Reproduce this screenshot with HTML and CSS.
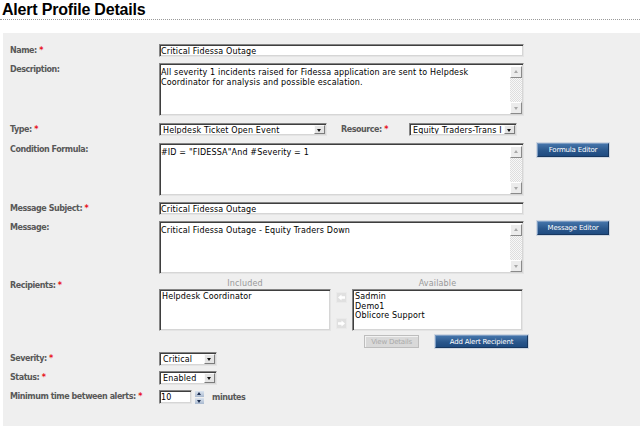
FILE: index.html
```html
<!DOCTYPE html>
<html lang="en">
<head>
  <meta charset="UTF-8" />
  <title>Alert Profile Details</title>
  <link rel="stylesheet" href="styles.css">
</head>
<body>

  <h1 class="page-title">Alert Profile Details</h1>

  <div class="panel">

    <div class="row row-name">
      <div class="label">Name: <span class="req">*</span></div>
      <input class="text-input wide" type="text" value="Critical Fidessa Outage">
    </div>

    <div class="row row-desc">
      <div class="label">Description:</div>
      <div class="textbox wide">
        <div class="textbox-text">All severity 1 incidents raised for Fidessa application are sent to Helpdesk Coordinator for analysis and possible escalation.</div>
        <div class="scrollbar"><span class="sb-btn up"></span><span class="sb-track"></span><span class="sb-btn down"></span></div>
      </div>
    </div>

    <div class="row row-type">
      <div class="label">Type: <span class="req">*</span></div>
      <div class="select select-type"><span class="select-text">Helpdesk Ticket Open Event</span><span class="drop"></span></div>
      <div class="label label-inline">Resource: <span class="req">*</span></div>
      <div class="select select-resource"><span class="select-text">Equity Traders-Trans I</span><span class="drop"></span></div>
    </div>

    <div class="row row-cond">
      <div class="label">Condition Formula:</div>
      <div class="textbox wide">
        <div class="textbox-text">#ID = "FIDESSA"And #Severity = 1</div>
        <div class="scrollbar"><span class="sb-btn up"></span><span class="sb-track"></span><span class="sb-btn down"></span></div>
      </div>
      <button class="btn-blue side-btn">Formula Editor</button>
    </div>

    <div class="row row-subject">
      <div class="label">Message Subject: <span class="req">*</span></div>
      <input class="text-input wide" type="text" value="Critical Fidessa Outage">
    </div>

    <div class="row row-message">
      <div class="label">Message:</div>
      <div class="textbox wide">
        <div class="textbox-text">Critical Fidessa Outage - Equity Traders Down</div>
        <div class="scrollbar"><span class="sb-btn up"></span><span class="sb-track"></span><span class="sb-btn down"></span></div>
      </div>
      <button class="btn-blue side-btn">Message Editor</button>
    </div>

    <div class="row row-recipients">
      <div class="label label-recip">Recipients: <span class="req">*</span></div>
      <div class="recipients">
        <div class="recip-lists">
          <div class="recip-col included">
            <div class="list-caption">Included</div>
            <div class="listbox">
              <div>Helpdesk Coordinator</div>
            </div>
          </div>
          <div class="move-btns">
            <span class="move-btn">
              <svg width="9" height="9" viewBox="0 0 9 9"><path d="M1 4.5 L4.5 1.5 V3.3 H8 V5.7 H4.5 V7.5 Z" fill="#fff"/></svg>
            </span>
            <span class="move-btn">
              <svg width="9" height="9" viewBox="0 0 9 9"><path d="M8 4.5 L4.5 1.5 V3.3 H1 V5.7 H4.5 V7.5 Z" fill="#fff"/></svg>
            </span>
          </div>
          <div class="recip-col available">
            <div class="list-caption">Available</div>
            <div class="listbox">
              <div>Sadmin</div>
              <div>Demo1</div>
              <div>Oblicore Support</div>
            </div>
          </div>
        </div>
        <div class="recip-actions">
          <button class="btn-disabled">View Details</button>
          <button class="btn-blue btn-add">Add Alert Recipient</button>
        </div>
      </div>
    </div>

    <div class="row row-severity">
      <div class="label">Severity: <span class="req">*</span></div>
      <div class="select select-small"><span class="select-text">Critical</span><span class="drop"></span></div>
    </div>

    <div class="row row-status">
      <div class="label">Status: <span class="req">*</span></div>
      <div class="select select-small"><span class="select-text">Enabled</span><span class="drop"></span></div>
    </div>

    <div class="row row-min">
      <div class="label">Minimum time between alerts: <span class="req">*</span></div>
      <input class="text-input num-input" type="text" value="10">
      <div class="spinner"><span class="spin up"></span><span class="spin down"></span></div>
      <div class="units">minutes</div>
    </div>

  </div>

</body>
</html>
```

FILE: styles.css
```css
* {
  box-sizing: border-box;
}

body {
  margin: 0;
  background: #ffffff;
  font-family: 'DejaVu Sans', Verdana, sans-serif;
  font-size: 8px;
  letter-spacing: 0.15px;
  color: #000;
}

.page-title {
  margin: 0;
  padding-left: 2px;
  height: 20px;
  font-family: 'Liberation Sans', Arial, sans-serif;
  font-size: 16px;
  line-height: 19px;
  letter-spacing: -0.2px;
  font-weight: bold;
  color: #000;
  border-bottom: 1px dotted #9a9a9a;
}

.panel {
  margin: 13px 0 0 3px;
  padding: 11px 0 30px 7px;
  background: #efefef;
  height: 393px;
}

.row {
  display: flex;
  align-items: flex-start;
}

.label {
  width: 149px;
  flex: none;
  padding-top: 1px;
  line-height: 11px;
  font-weight: bold;
  letter-spacing: -0.45px;
  color: #585858;
  white-space: nowrap;
}

.req {
  color: #e8101a;
}

/* sunken fields */
.text-input,
.textbox,
.listbox,
.select {
  background: #fff;
  border: 1px solid;
  border-color: #858585 #e4e4e4 #e4e4e4 #858585;
  box-shadow: inset 1px 1px 0 #3e3e3e, inset -1px -1px 0 #d6d6d6;
}

.text-input {
  height: 13px;
  margin: 0;
  padding: 1px 1px 0 1px;
  font-family: inherit;
  font-size: 8px;
  letter-spacing: 0.15px;
  color: #000;
  outline: none;
}

.wide {
  width: 365px;
}

.row-name,
.row-subject {
  margin-bottom: 6px;
}

.row-desc,
.row-type {
  margin-bottom: 7px;
}

.row-cond,
.row-message {
  margin-bottom: 6px;
}

.textbox {
  height: 53px;
  display: flex;
  padding: 2px 1px 1px 1px;
}

.textbox-text {
  flex: 1;
  padding: 2px 0 0 0;
  line-height: 9.5px;
  overflow: hidden;
}

.scrollbar {
  width: 12px;
  display: flex;
  flex-direction: column;
  background: repeating-conic-gradient(#f8f8f8 0 25%, #dedede 0 50%) 0 0 / 2px 2px;
}

.sb-btn {
  height: 12px;
  background: #ececec;
  border: 1px solid;
  border-color: #fff #8a8a8a #8a8a8a #fff;
  position: relative;
}

.sb-btn::after {
  content: '';
  position: absolute;
  left: 3px;
  width: 0;
  height: 0;
  border-left: 2.5px solid transparent;
  border-right: 2.5px solid transparent;
}

.sb-btn.up::after {
  top: 3px;
  border-bottom: 3px solid #a8a8a8;
}

.sb-btn.down::after {
  top: 4px;
  border-top: 3px solid #a8a8a8;
}

.sb-track {
  flex: 1;
}

/* select boxes */
.select {
  height: 13px;
  display: flex;
  align-items: stretch;
  padding: 1px 1px 1px 2px;
}

.select-text {
  flex: 1;
  padding-left: 1px;
  line-height: 11px;
  overflow: hidden;
  white-space: nowrap;
}

.drop {
  width: 11px;
  flex: none;
  background: #e4e4e4;
  border: 1px solid;
  border-color: #fafafa #7c7c7c #7c7c7c #fafafa;
  position: relative;
}

.drop::after {
  content: '';
  position: absolute;
  left: 2px;
  top: 3px;
  border-left: 2.5px solid transparent;
  border-right: 2.5px solid transparent;
  border-top: 3px solid #111;
}

.select-type {
  width: 168px;
}

.label-inline {
  width: 68px;
  margin-left: 14px;
}

.select-resource {
  width: 108px;
}

.select-small {
  width: 58px;
  height: 14px;
}

/* buttons */
button {
  font-family: inherit;
  font-size: 7px;
  letter-spacing: -0.2px;
  padding: 0;
  cursor: pointer;
}

.btn-blue {
  height: 14px;
  color: #fff;
  background: linear-gradient(#4474aa, #2a578c 55%, #1f4b80);
  border: 1px solid;
  border-color: #7d9cc2 #17375f #17375f #7d9cc2;
  box-shadow: 0 0 0 1px #cfd7e2;
}

.side-btn {
  width: 72px;
  margin-left: 13px;
}

/* recipients */
.row-recipients {
  margin-bottom: 4px;
}

.label-recip {
  padding-top: 0;
}

.recipients {
  width: 370px;
}

.recip-lists {
  display: flex;
  align-items: flex-start;
}

.recip-col {
  display: flex;
  flex-direction: column;
}

.included {
  width: 172px;
}

.available {
  width: 171px;
}

.list-caption {
  height: 9px;
  line-height: 8px;
  text-align: center;
  color: #999;
}

.listbox {
  height: 42px;
  padding: 2px 2px 1px 2px;
  line-height: 9.5px;
}

.move-btns {
  width: 11px;
  margin: 12px 5px 0 5px;
  display: flex;
  flex-direction: column;
  gap: 15px;
}

.move-btn {
  height: 11px;
  background: #e0e0e0;
  border: 1px solid #eaeaea;
  display: flex;
  align-items: center;
  justify-content: center;
}

.recip-actions {
  display: flex;
  margin-top: 4px;
}

.btn-disabled {
  width: 55px;
  height: 13px;
  margin-left: 205px;
  color: #a9a9a9;
  background: #d9d9d9;
  border: 1px solid #bdbdbd;
  box-shadow: inset 1px 1px 0 #f2f2f2;
}

.btn-add {
  width: 93px;
  height: 13px;
  margin-left: 16px;
}

.row-severity {
  margin-bottom: 5px;
}

.row-status {
  margin-bottom: 5px;
}

.num-input {
  width: 33px;
  height: 14px;
}

.spinner {
  width: 9px;
  height: 13px;
  margin: 1px 0 0 3px;
  display: flex;
  flex-direction: column;
  gap: 1px;
}

.spin {
  flex: 1;
  background: linear-gradient(#dbe4ef, #a9b9cf);
  position: relative;
}

.spin::after {
  content: '';
  position: absolute;
  left: 2px;
  border-left: 2.5px solid transparent;
  border-right: 2.5px solid transparent;
}

.spin.up::after {
  top: 1px;
  border-bottom: 3px solid #1d2f52;
}

.spin.down::after {
  top: 2px;
  border-top: 3px solid #1d2f52;
}

.units {
  margin-left: 8px;
  padding-top: 3px;
  font-weight: bold;
  letter-spacing: -0.45px;
  color: #585858;
}
```
